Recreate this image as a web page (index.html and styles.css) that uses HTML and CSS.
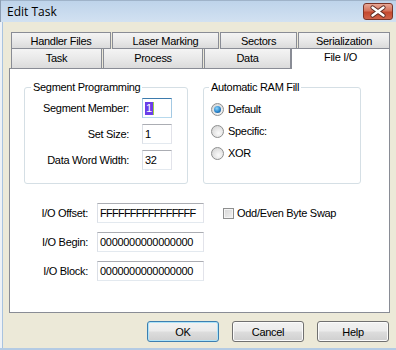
FILE: index.html
```html
<!DOCTYPE html>
<html lang="en">
<head>
    <meta charset="UTF-8">
    <title>Edit Task</title>
    <link rel="stylesheet" href="styles.css">
</head>
<body>
    <div class="window">
        <div class="titlebar">
            <span class="title">Edit Task</span>
            <span class="close">
                <svg width="28" height="15" viewBox="0 0 28 15">
                    <path d="M8.5 3.5 L19.5 11.5 M19.5 3.5 L8.5 11.5" stroke="#5b2a22" stroke-width="4.2" stroke-linecap="round"/>
                    <path d="M8.5 3.5 L19.5 11.5 M19.5 3.5 L8.5 11.5" stroke="#fff" stroke-width="2.4" stroke-linecap="round"/>
                </svg>
            </span>
        </div>

        <div class="dialog">
            <div class="tabs">
                <div class="tab-row back">
                    <div class="tab t-handler">Handler Files</div>
                    <div class="tab t-laser">Laser Marking</div>
                    <div class="tab t-sectors">Sectors</div>
                    <div class="tab t-serial">Serialization</div>
                </div>
                <div class="tab-row front">
                    <div class="tab t-task">Task</div>
                    <div class="tab t-process">Process</div>
                    <div class="tab t-data">Data</div>
                    <div class="tab t-file active">File I/O</div>
                </div>
            </div>

            <div class="panel">
                <div class="groups">
                    <fieldset class="group seg">
                        <legend>Segment Programming</legend>
                        <div class="seg-grid">
                            <label>Segment Member:</label>
                            <div class="field focus"><span class="sel">1</span></div>
                            <label>Set Size:</label>
                            <div class="field">1</div>
                            <label>Data Word Width:</label>
                            <div class="field">32</div>
                        </div>
                    </fieldset>

                    <fieldset class="group ram">
                        <legend>Automatic RAM Fill</legend>
                        <div class="radio-list">
                            <div class="option"><span class="radio checked"></span>Default</div>
                            <div class="option"><span class="radio"></span>Specific:</div>
                            <div class="option"><span class="radio"></span>XOR</div>
                        </div>
                    </fieldset>
                </div>

                <div class="io-grid">
                    <label>I/O Offset:</label>
                    <div class="field hex">FFFFFFFFFFFFFFFF</div>
                    <div class="check-row"><span class="checkbox"></span>Odd/Even Byte Swap</div>
                    <label>I/O Begin:</label>
                    <div class="field">0000000000000000</div>
                    <span></span>
                    <label>I/O Block:</label>
                    <div class="field">0000000000000000</div>
                    <span></span>
                </div>
            </div>

            <div class="actions">
                <button class="default">OK</button>
                <button>Cancel</button>
                <button>Help</button>
            </div>
        </div>
    </div>
</body>
</html>
```

FILE: styles.css
```css
body {
    margin: 0;
    width: 396px;
    height: 350px;
    overflow: hidden;
    background: #ece9d8;
    font-family: "Liberation Sans", Arial, sans-serif;
    font-size: 11px;
    letter-spacing: -0.3px;
    color: #000;
}

.window {
    height: 350px;
    box-sizing: border-box;
    border-bottom: 2px solid #b4cbe4;
    display: flex;
    flex-direction: column;
}

.titlebar {
    height: 22px;
    flex: none;
    display: flex;
    align-items: center;
    justify-content: space-between;
    padding: 0 3px 0 7px;
    background: linear-gradient(#bdd3ea, #d2e1f1);
    box-shadow: inset 1px 0 0 #8d9fb4, inset 0 1px 0 #9fb3c9;
}

.title {
    font-family: "Open Sans", "Noto Sans", sans-serif;
    font-size: 12px;
    letter-spacing: 0;
}

.close {
    width: 30px;
    height: 17px;
    box-sizing: border-box;
    border: 1px solid #7a3428;
    border-radius: 3px;
    background: linear-gradient(#e9a896, #d5735c 45%, #c4492f 55%, #d0634a);
    display: flex;
    align-items: center;
    justify-content: center;
}

.dialog {
    flex: 1;
    padding: 10px 0 0 9px;
    box-shadow: inset 2px 0 0 #eef2f7, inset 3px 0 0 #a9c3df;
}

/* tabs */
.tabs {
    padding-left: 2px;
}

.tab-row {
    display: flex;
}

.tab {
    box-sizing: border-box;
    border: 1px solid #898c95;
    background: linear-gradient(#f4f4f4, #e9e9e9 50%, #dbdbdb);
    text-align: center;
}

.back .tab {
    height: 17px;
    line-height: 16px;
    margin-right: 1px;
}

.front {
    height: 19px;
}

.front .tab {
    height: 19px;
    border-top: none;
    border-bottom: none;
    line-height: 19px;
    margin-right: 1px;
}

.front .tab.active {
    height: 21px;
    margin: -1px 0 -1px 0;
    border-top: 1px solid #898c95;
    background: #fff;
    line-height: 16px;
    position: relative;
    z-index: 1;
}

.t-handler { width: 100px; }
.t-laser { width: 107px; }
.t-sectors { width: 77px; }
.t-serial { width: 92px; }
.t-task { width: 91px; }
.t-process { width: 100px; }
.t-data { width: 87px; }
.front .t-data { margin-right: 0; }
.t-file { width: 99px; }

/* page */
.panel {
    width: 381px;
    height: 245px;
    box-sizing: border-box;
    border: 1px solid #898c95;
    background: #fff;
}

.groups {
    display: flex;
    gap: 15px;
    margin: 12px 0 0 14px;
}

.group {
    box-sizing: border-box;
    height: 103px;
    margin: 0;
    padding: 0;
    border: 1px solid #d5dfe5;
    border-radius: 3px;
}

.group legend {
    padding: 0 2px;
    line-height: 13px;
}

.seg { width: 164px; }
.seg legend { margin-left: 6px; }
.ram { width: 158px; }
.ram legend { margin-left: 5px; }

.seg-grid {
    display: grid;
    grid-template-columns: 104px 30px;
    grid-auto-rows: 20px;
    column-gap: 13px;
    row-gap: 6px;
    align-items: center;
    margin-top: 4px;
}

label {
    text-align: right;
}

.field {
    box-sizing: border-box;
    height: 20px;
    line-height: 18px;
    padding-left: 2px;
    border: 1px solid;
    border-color: #abadb3 #e2e3ea #e3e9ef #dbdfe6;
    background: #fff;
    white-space: nowrap;
    overflow: hidden;
}

.field.focus {
    border-color: #3d7bad #a4c9e3 #b7d9ed #a4c9e3;
}

.sel {
    display: inline-block;
    line-height: 13px;
    padding: 0 1px;
    background: #6a3de8;
    color: #fff;
    border-right: 1px solid #9bd046;
    vertical-align: middle;
    margin-top: -2px;
}

.radio-list {
    display: flex;
    flex-direction: column;
    gap: 6px;
    margin: 7px 0 0 7px;
}

.option {
    height: 16px;
    display: flex;
    align-items: center;
    gap: 4px;
}

.radio {
    width: 13px;
    height: 13px;
    box-sizing: border-box;
    border: 1px solid #8e8f8f;
    border-radius: 50%;
    background: radial-gradient(circle at 60% 65%, #fbfbfb, #dcdcdc 70%, #cfcfcf);
    display: flex;
    align-items: center;
    justify-content: center;
}

.radio.checked::after {
    content: "";
    width: 7px;
    height: 7px;
    border-radius: 50%;
    background: radial-gradient(circle at 40% 35%, #8fd6fb, #2a86cc 55%, #0d3f78);
}

.io-grid {
    display: grid;
    grid-template-columns: 78px 107px auto;
    grid-auto-rows: 20px;
    column-gap: 9px;
    row-gap: 9px;
    align-items: center;
    margin-top: 19px;
}

.field.hex {
    letter-spacing: -0.75px;
}

.check-row {
    display: flex;
    align-items: center;
    gap: 3px;
    margin-left: 10px;
}

.checkbox {
    width: 11px;
    height: 11px;
    box-sizing: border-box;
    border: 1px solid #8e8f8f;
    background: linear-gradient(135deg, #d6d6d6, #f2f2f2);
    box-shadow: inset 0 0 0 1px #f4f4f4;
}

/* buttons */
.actions {
    width: 381px;
    box-sizing: border-box;
    padding-right: 1px;
    margin-top: 8px;
    display: flex;
    justify-content: flex-end;
    gap: 13px;
}

button {
    width: 72px;
    height: 21px;
    padding: 0;
    font-family: inherit;
    font-size: 11px;
    letter-spacing: -0.3px;
    color: #000;
    border: 1px solid #707070;
    border-radius: 3px;
    background: linear-gradient(#f2f2f2, #ebebeb 48%, #dddddd 52%, #cfcfcf);
    box-shadow: inset 0 0 0 1px #fbfbfb;
}

button.default {
    border-color: #3c7fb1;
    box-shadow: inset 0 0 0 1px #aee3f8;
}
```
